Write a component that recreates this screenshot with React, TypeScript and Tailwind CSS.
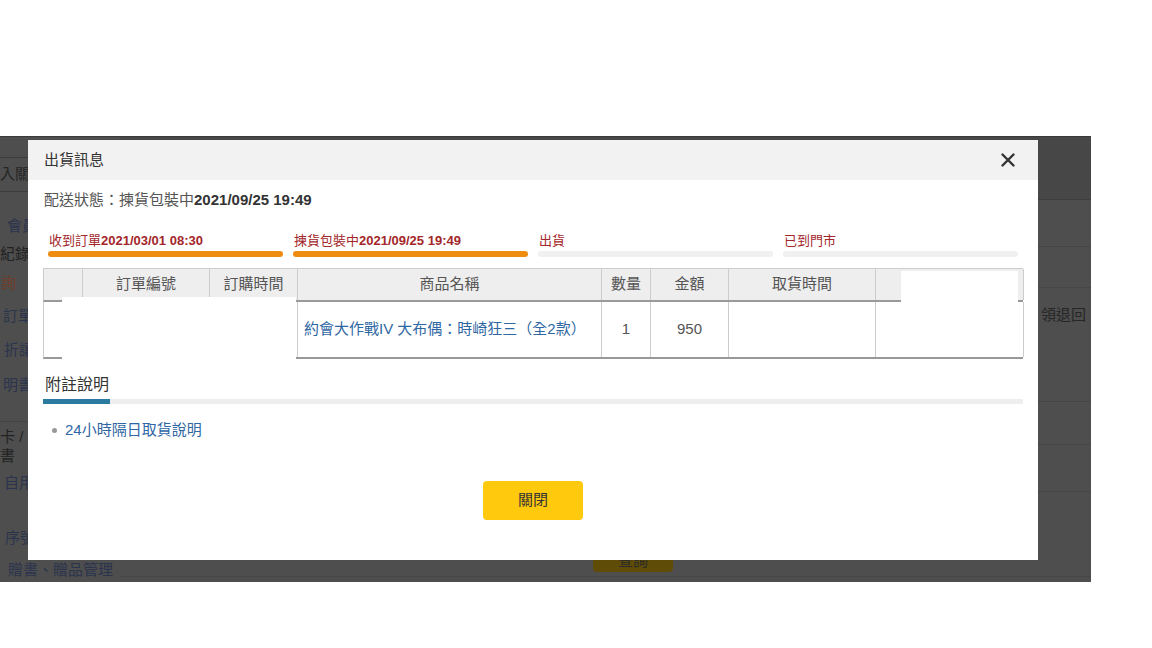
import React from 'react';

const font = { fontFamily: '"Liberation Sans", "Noto Sans CJK TC", sans-serif' };

const steps = [
  { label: '收到訂單', date: '2021/03/01 08:30', done: true },
  { label: '揀貨包裝中', date: '2021/09/25 19:49', done: true },
  { label: '出貨', date: '', done: false },
  { label: '已到門市', date: '', done: false },
];

const columns = [
  { title: '', w: 'w-[39px]' },
  { title: '訂單編號', w: 'w-[127px]' },
  { title: '訂購時間', w: 'w-[88px]' },
  { title: '商品名稱', w: 'w-[304px]' },
  { title: '數量', w: 'w-[49px]' },
  { title: '金額', w: 'w-[78px]' },
  { title: '取貨時間', w: 'w-[147px]' },
  { title: '', w: 'w-[148px]' },
];

const SideMenu: React.FC = () => (
  <div className="w-[120px] shrink-0 flex flex-col text-[15px] whitespace-nowrap">
    <div className="h-[20px]" />
    <div className="h-[35px] border-y border-[#3c3c3c] flex items-center text-[#262626]">入關</div>
    <div className="h-[20px]" />
    <div className="h-[29px] flex items-center text-[#2b344d] ml-[7px]">會員</div>
    <div className="h-[27px] flex items-center text-[#222]">紀錄</div>
    <div className="h-[31px] flex items-center text-[#6e3e2a] ml-[1px]">詢</div>
    <div className="h-[34px] flex items-center text-[#2b344d] ml-[3px]">訂單</div>
    <div className="h-[35px] flex items-center text-[#2b344d] ml-[4px]">折讓</div>
    <div className="h-[34px] flex items-center text-[#2b344d] ml-[3px]">明書</div>
    <div className="h-[20px] border-b border-[#444]" />
    <div className="h-[22px] mt-[4px] flex items-center text-[#222]">卡 /</div>
    <div className="h-[17px] flex items-center text-[#222]">書</div>
    <div className="h-[36px] flex items-center text-[#2b344d] ml-[4px]">自用</div>
    <div className="h-[54px] flex items-end pb-[6px] text-[#2b344d] ml-[5px]">序號</div>
    <div className="h-[27px] flex items-end pb-[1px] text-[#2b344d] ml-[8px]">贈書、贈品管理</div>
  </div>
);

const BackgroundPage: React.FC = () => (
  <div className="flex w-full h-full">
    <SideMenu />
    <div className="flex-1 flex flex-col">
      <div className="h-[63px] bg-[#474747] border-b border-[#3e3e3e]" />
      <div className="h-[47px] border-b border-[#454545]" />
      <div className="h-[41px] border-b border-[#474747]" />
      <div className="h-[114px] border-b border-[#454545] flex justify-end pr-[5px] pt-[16px] text-[15px] text-[#262626]">
        領退回
      </div>
      <div className="h-[43px] border-b border-[#454545]" />
      <div className="h-[47px] border-b border-[#454545]" />
      <div className="h-[85px] border-b border-[#474747] flex items-end pl-[473px] pb-[4px]">
        <div className="w-[80px] h-[22px] rounded-[4px] bg-[#5f4c07] text-center text-[15px] text-[#2a2a2a]">查詢</div>
      </div>
    </div>
  </div>
);

const Modal: React.FC = () => (
  <div className="absolute left-[28px] top-[3px] w-[1010px] h-[420px] bg-white flex flex-col">
    <div className="h-[40px] bg-[#f2f2f2] flex items-center justify-between pl-[16px] pr-[23px]">
      <span className="text-[15px] text-[#333]">出貨訊息</span>
      <svg width="14" height="14" viewBox="0 0 14 14">
        <path d="M1.5 1.5 L12.5 12.5 M12.5 1.5 L1.5 12.5" stroke="#333" strokeWidth="2.4" strokeLinecap="round" />
      </svg>
    </div>
    <div className="px-[15px] flex flex-col">
      <div className="h-[20px] mt-[10px] pl-[1px] flex items-center text-[15px] text-[#555]">
        配送狀態：揀貨包裝中<b className="text-[#333]">2021/09/25 19:49</b>
      </div>
      <div className="flex mt-[23px] pl-[5px]">
        {steps.map((s) => (
          <div key={s.label} className="w-[245px] shrink-0 pr-[10px]">
            <div className="h-[16px] flex items-center text-[13px] text-[#a3262a] pl-[1px] whitespace-nowrap">
              {s.label}
              {s.date && <b>{s.date}</b>}
            </div>
            <div className={`mt-[2px] h-[6px] rounded-full ${s.done ? 'bg-[#ee8c10]' : 'bg-[#f0f0f0]'}`} />
          </div>
        ))}
      </div>
      <div className="relative mt-[11px] w-[980px]">
        <div className="flex h-[34px] bg-[#eeeeee] border-t border-l border-[#cccccc] border-b-2 border-b-[#999]">
          {columns.map((c, i) => (
            <div
              key={i}
              className={`${c.w} shrink-0 border-r border-[#cccccc] flex items-center justify-center text-[15px] text-[#555]`}
            >
              {c.title}
            </div>
          ))}
        </div>
        <div className="flex h-[57px] border-l border-[#cccccc] border-b-2 border-b-[#999] text-[15px] text-[#555]">
          <div className="w-[39px] shrink-0 border-r border-[#ccc] flex items-center pl-[17px] text-[10px] text-[#888]">·</div>
          <div className="w-[127px] shrink-0 border-r border-[#ccc]" />
          <div className="w-[88px] shrink-0 border-r border-[#ccc]" />
          <div className="w-[304px] shrink-0 border-r border-[#ccc] flex items-center pl-[6px] text-[#2f67a3] whitespace-nowrap">
            約會大作戰IV 大布偶：時崎狂三（全2款）
          </div>
          <div className="w-[49px] shrink-0 border-r border-[#ccc] flex items-center justify-center">1</div>
          <div className="w-[78px] shrink-0 border-r border-[#ccc] flex items-center justify-center">950</div>
          <div className="w-[147px] shrink-0 border-r border-[#ccc]" />
          <div className="w-[148px] shrink-0 border-r border-[#ccc]" />
        </div>
        <div className="absolute left-[19px] top-[29px] w-[234px] h-[62px] bg-white" />
        <div className="absolute left-[858px] top-[3px] w-[117px] h-[86px] bg-white" />
      </div>
      <div className="mt-[16px] pl-[2px] h-[20px] flex items-center text-[16px] text-[#333]">附註說明</div>
      <div className="mt-[4px] h-[5px] bg-[#eeeeee] w-[980px]">
        <div className="w-[67px] h-full bg-[#2b7aa0]" />
      </div>
      <ul className="mt-[16px] pl-[9px]">
        <li className="h-[20px] flex items-center text-[15px] text-[#2f67a3]">
          <span className="w-[5px] h-[5px] rounded-full bg-[#999] mr-[8px]" />
          24小時隔日取貨說明
        </li>
      </ul>
    </div>
    <div className="mt-[41px] flex justify-center">
      <button className="w-[100px] h-[39px] rounded-[4px] bg-[#ffc90e] text-[15px] text-[#333]">關閉</button>
    </div>
  </div>
);

export default function App() {
  return (
    <div className="w-[1152px] h-[648px] bg-white" style={font}>
      <div className="h-[136px]" />
      <div className="relative w-[1091px] h-[446px] bg-[#4e4e4e] border-t border-[#3a3a3a] overflow-hidden">
        <BackgroundPage />
        <Modal />
      </div>
    </div>
  );
}
